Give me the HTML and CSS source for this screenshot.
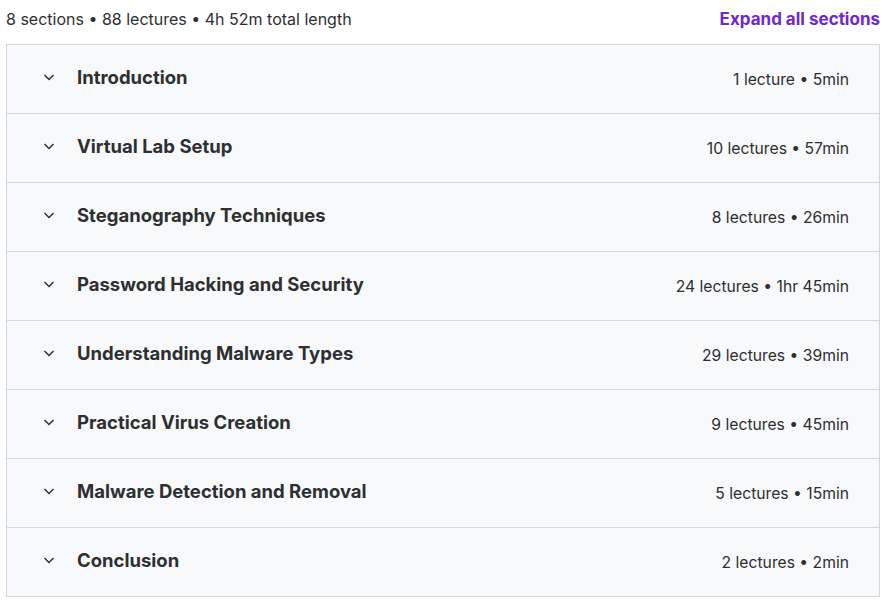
FILE: index.html
```html
<!DOCTYPE html>
<html>
<head>
<meta charset="utf-8">
<link rel="stylesheet" href="styles.css">
</head>
<body>
<div class="page">
  <div class="top">
    <span class="summary">8 sections • 88 lectures • 4h 52m total length</span>
    <span class="expand">Expand all sections</span>
  </div>
  <div class="list">
    <div class="row"><span class="chev"><svg width="14" height="14" viewBox="0 0 14 14"><path d="M2.5 5l4.5 4.5 4.5-4.5" fill="none" stroke="#2d2f31" stroke-width="1.5"/></svg></span><span class="title">Introduction</span><span class="meta">1 lecture • 5min</span></div>
    <div class="row"><span class="chev"><svg width="14" height="14" viewBox="0 0 14 14"><path d="M2.5 5l4.5 4.5 4.5-4.5" fill="none" stroke="#2d2f31" stroke-width="1.5"/></svg></span><span class="title">Virtual Lab Setup</span><span class="meta">10 lectures • 57min</span></div>
    <div class="row"><span class="chev"><svg width="14" height="14" viewBox="0 0 14 14"><path d="M2.5 5l4.5 4.5 4.5-4.5" fill="none" stroke="#2d2f31" stroke-width="1.5"/></svg></span><span class="title">Steganography Techniques</span><span class="meta">8 lectures • 26min</span></div>
    <div class="row"><span class="chev"><svg width="14" height="14" viewBox="0 0 14 14"><path d="M2.5 5l4.5 4.5 4.5-4.5" fill="none" stroke="#2d2f31" stroke-width="1.5"/></svg></span><span class="title">Password Hacking and Security</span><span class="meta">24 lectures • 1hr 45min</span></div>
    <div class="row"><span class="chev"><svg width="14" height="14" viewBox="0 0 14 14"><path d="M2.5 5l4.5 4.5 4.5-4.5" fill="none" stroke="#2d2f31" stroke-width="1.5"/></svg></span><span class="title">Understanding Malware Types</span><span class="meta">29 lectures • 39min</span></div>
    <div class="row"><span class="chev"><svg width="14" height="14" viewBox="0 0 14 14"><path d="M2.5 5l4.5 4.5 4.5-4.5" fill="none" stroke="#2d2f31" stroke-width="1.5"/></svg></span><span class="title">Practical Virus Creation</span><span class="meta">9 lectures • 45min</span></div>
    <div class="row"><span class="chev"><svg width="14" height="14" viewBox="0 0 14 14"><path d="M2.5 5l4.5 4.5 4.5-4.5" fill="none" stroke="#2d2f31" stroke-width="1.5"/></svg></span><span class="title">Malware Detection and Removal</span><span class="meta">5 lectures • 15min</span></div>
    <div class="row"><span class="chev"><svg width="14" height="14" viewBox="0 0 14 14"><path d="M2.5 5l4.5 4.5 4.5-4.5" fill="none" stroke="#2d2f31" stroke-width="1.5"/></svg></span><span class="title">Conclusion</span><span class="meta">2 lectures • 2min</span></div>
  </div>
</div>
</body>
</html>
```
FILE: styles.css
```css
html, body { margin: 0; padding: 0; background: #fff; }
body { font-family: Inter, "Liberation Sans", sans-serif; color: #2d2f31; }
.page { padding: 0 7px 0 6px; }
.top { display: flex; justify-content: space-between; align-items: center; height: 38px; }
.summary { font-size: 16px; color: #2d2f31; }
.expand { font-size: 17px; font-weight: 700; color: #6d28d2; }
.list { margin-top: 6px; border: 1px solid #d1d7dc; border-bottom: none; }
.row { display: flex; align-items: center; height: 68px; background: #f7f9fa; border-bottom: 1px solid #d1d7dc; padding: 0 30px 0 35px; }
.chev { width: 14px; height: 14px; display: flex; margin-right: 21px; margin-top: -4px; }
.title { font-size: 18.5px; font-weight: 700; flex: 1; margin-top: -4px; }
.meta { font-size: 15.7px; margin-top: 0; }
```
